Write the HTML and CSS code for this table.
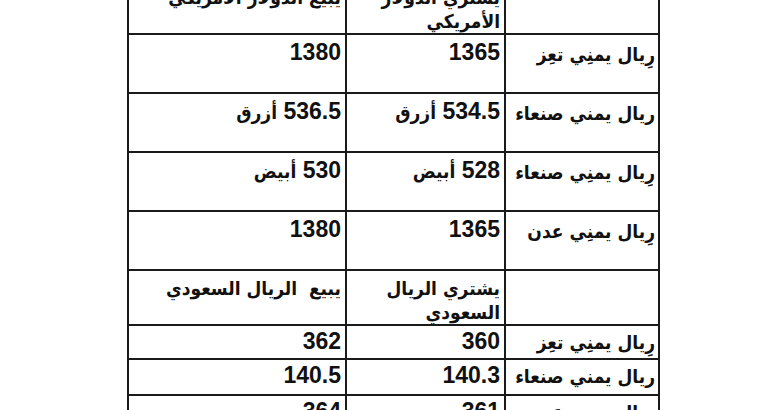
FILE: index.html
```html
<!DOCTYPE html>
<html lang="ar" dir="rtl">
<head>
<meta charset="utf-8">
<title>أسعار الصرف</title>
<link rel="stylesheet" href="styles.css">
</head>
<body>
<table class="rates">
  <colgroup>
    <col class="c-label">
    <col class="c-buy">
    <col class="c-sell">
  </colgroup>
  <tbody>
    <tr class="r-head">
      <td></td>
      <td class="hd">يشتري الدولار<br>الأمريكي</td>
      <td class="hd">يبيع  الدولار الأمريكي</td>
    </tr>
    <tr class="r-big">
      <td class="lbl">رِيال يمنِي تعِز</td>
      <td class="num">1365</td>
      <td class="num">1380</td>
    </tr>
    <tr class="r-big">
      <td class="lbl">ريال يمني صنعاء</td>
      <td class="num">534.5 <span class="ar">أزرق</span></td>
      <td class="num">536.5 <span class="ar">أزرق</span></td>
    </tr>
    <tr class="r-big">
      <td class="lbl">رِيال يمنِي صنعاء</td>
      <td class="num">528 <span class="ar">أبيض</span></td>
      <td class="num">530 <span class="ar">أبيض</span></td>
    </tr>
    <tr class="r-big">
      <td class="lbl">رِيال يمنِي عدن</td>
      <td class="num">1365</td>
      <td class="num">1380</td>
    </tr>
    <tr class="r-head2">
      <td></td>
      <td class="hd">يشتري الريال<br>السعودي</td>
      <td class="hd">يبيع&nbsp;&nbsp;الريال السعودي</td>
    </tr>
    <tr class="r-small">
      <td class="lbl">رِيال يمنِي تعِز</td>
      <td class="num">360</td>
      <td class="num">362</td>
    </tr>
    <tr class="r-small2">
      <td class="lbl">ريال يمني صنعاء</td>
      <td class="num">140.3</td>
      <td class="num">140.5</td>
    </tr>
    <tr class="r-small">
      <td class="lbl">رِيال يمنِي عدن</td>
      <td class="num">361</td>
      <td class="num">364</td>
    </tr>
  </tbody>
</table>
</body>
</html>
```
FILE: styles.css
```css
html, body {
  margin: 0;
  padding: 0;
  background: #ffffff;
  overflow: hidden;
}
body {
  font-family: "Liberation Sans", "DejaVu Sans Condensed", "DejaVu Sans", sans-serif;
  color: #111111;
}
.rates {
  border-collapse: collapse;
  margin-top: -22px;
  margin-right: 100px;
  table-layout: fixed;
  width: 531px;
}
.c-label { width: 154px; }
.c-buy { width: 159px; }
.c-sell { width: 218px; }
.rates td {
  border: 2px solid #1a1a1a;
  vertical-align: top;
  text-align: right;
  padding: 5px 4px 0 4px;
  font-size: 23px;
  line-height: 25px;
  font-weight: bold;
  white-space: nowrap;
}
.rates td.lbl,
.rates td.hd,
.num .ar {
  font-family: "DejaVu Sans Condensed", "DejaVu Sans", sans-serif;
  font-stretch: condensed;
  font-size: 19px;
}
.rates td.lbl {
  padding-right: 3px;
  padding-top: 7px;
}
.rates td.hd {
  line-height: 24px;
}
.r-head { height: 54px; }
.r-big { height: 59px; }
.r-head2 { height: 55px; }
.r-small { height: 34px; }
.r-small2 { height: 36px; }
.r-small td, .r-small2 td { padding-top: 3px; }
.r-small td.lbl, .r-small2 td.lbl { padding-top: 4px; }
```
